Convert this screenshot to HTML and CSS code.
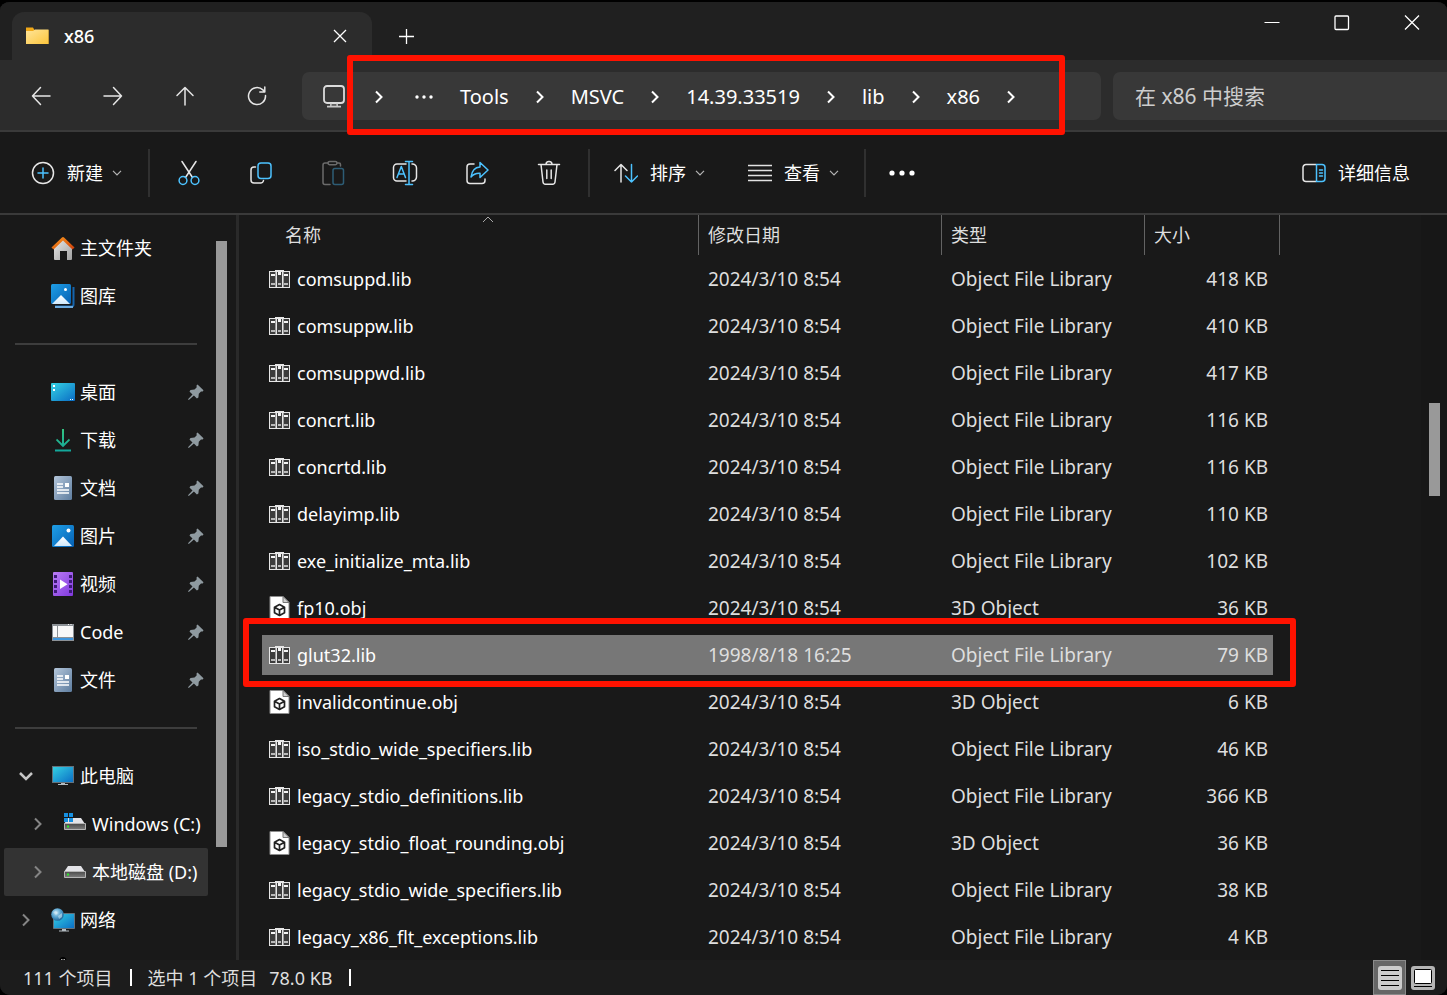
FILE: index.html
```html
<!DOCTYPE html>
<html lang="zh-CN">
<head>
<meta charset="utf-8">
<title>x86</title>
<link rel="stylesheet" href="styles.css">
</head>
<body>
<svg class="defs" aria-hidden="true">
  <defs>
    <linearGradient id="g-folder" x1="0" y1="0" x2="1" y2="1"><stop offset="0" stop-color="#ffe59a"/><stop offset="1" stop-color="#fcc53c"/></linearGradient>
    <linearGradient id="g-wall" x1="0" y1="0" x2="1" y2="1"><stop offset="0" stop-color="#e8e8e8"/><stop offset="1" stop-color="#a2a2a2"/></linearGradient>
    <linearGradient id="g-roof" x1="0" y1="0" x2="1" y2="1"><stop offset="0" stop-color="#f8951d"/><stop offset="1" stop-color="#d2430c"/></linearGradient>
    <linearGradient id="g-blue" x1="0" y1="0" x2="1" y2="1"><stop offset="0" stop-color="#1f9fe6"/><stop offset="1" stop-color="#0560b4"/></linearGradient>
    <linearGradient id="g-hill" x1="0" y1="0" x2="0" y2="1"><stop offset="0" stop-color="#ffffff"/><stop offset="1" stop-color="#cfe8fb"/></linearGradient>
    <linearGradient id="g-desk" x1="0" y1="0" x2="1" y2="1"><stop offset="0" stop-color="#35d3e4"/><stop offset="1" stop-color="#0a6cc4"/></linearGradient>
    <linearGradient id="g-down" x1="0" y1="0" x2="0" y2="1"><stop offset="0" stop-color="#34c481"/><stop offset="1" stop-color="#12a79c"/></linearGradient>
    <linearGradient id="g-doc" x1="0" y1="0" x2="1" y2="1"><stop offset="0" stop-color="#b4c6da"/><stop offset="1" stop-color="#5e7d9f"/></linearGradient>
    <linearGradient id="g-video" x1="0" y1="0" x2="1" y2="1"><stop offset="0" stop-color="#ba7cf5"/><stop offset="1" stop-color="#8038de"/></linearGradient>
    <linearGradient id="g-drive" x1="0" y1="0" x2="0" y2="1"><stop offset="0" stop-color="#4a4a4a"/><stop offset="1" stop-color="#7d7d7d"/></linearGradient>
    <radialGradient id="g-globe" cx=".4" cy=".35" r=".7"><stop offset="0" stop-color="#c6e6f5"/><stop offset=".5" stop-color="#58a4d0"/><stop offset="1" stop-color="#1b5f94"/></radialGradient>
  </defs>
  <symbol id="i-lib" viewBox="0 0 21 18">
    <path d="M0 1h6V0h9v1h6v17H0z" fill="#e6e6e6"/>
    <path d="M1 2h5v15H1zM8 2h5v15H8zM15 2h5v15h-5z" fill="#3c3c3c"/>
    <path d="M6.500 2v15M14.500 2v15" stroke="#9a9a9a" stroke-width="1"/>
    <path d="M2 4h4v2H2zM9 2h3v3H9zM15 4h4v2h-4z" fill="#f5f5f5"/>
    <path d="M2 13h4v2H2zM9 13h3v2H9zM15 13h4v2h-4z" fill="#b9b9b9"/>
  </symbol>
  <symbol id="i-obj" viewBox="0 0 20 24">
    <path d="M.5.5h13l6 6v17H.5z" fill="#fff" stroke="#8d8d8d"/>
    <path d="M13.500.5v6h6z" fill="#d0d0d0" stroke="#777"/>
    <path d="M10 8.500l5 2.700v5.600l-5 2.700-5-2.700v-5.600zM5 11.200l5 2.800 5-2.800M10 14v5.500" fill="none" stroke="#222" stroke-width="1.700" stroke-linejoin="round"/>
  </symbol>
  <symbol id="i-pin" viewBox="0 0 16 16">
    <path d="M9.500.5l6 5.700-.8 1.200-1.700.2-2.200 2.200-.4 3.700-1.500 1-3-3L.8 16 0 15.200l4.500-4.700L1.500 7.600l1-1.500 4-.6L8.600 3.500 8.600 1.300z" fill="#8f9aa0"/>
  </symbol>
  <symbol id="i-doc" viewBox="0 0 24 24">
    <rect x="3" width="18" height="24" rx="1.500" fill="url(#g-doc)"/>
    <path d="M6 8h6M6 11h6M6 14h12M6 17h12" stroke="#fff" stroke-width="1.400"/>
    <rect x="14" y="7" width="4" height="4" fill="#fff"/>
  </symbol>
  <symbol id="i-right" viewBox="0 0 10 14"><path d="M2 1.500L7.500 7 2 12.500" fill="none" stroke="currentColor" stroke-width="2"/></symbol>
  <symbol id="i-down" viewBox="0 0 10 6"><path d="M1 .8l4 4 4-4" fill="none" stroke="currentColor" stroke-width="1.200"/></symbol>
  <symbol id="i-drive" viewBox="0 0 24 24">
    <path d="M5 6h13l4 6H1z" fill="#e3e3e7"/>
    <path d="M1.500 11.500h21v6h-21z" fill="url(#g-drive)" stroke="#b5b5b5"/>
    <rect x="4" y="13.500" width="2" height="2" fill="#2bea2b"/>
  </symbol>
</svg>

<div class="window">
  <header class="titlebar">
    <div class="tab">
      <svg class="ic24" viewBox="0 0 24 24"><path d="M1 3.500h7l1.500 2.500H23.500v14H1z" fill="#f0a818"/><path d="M1 7h7l2-1.500h13.500V20H1z" fill="url(#g-folder)"/></svg>
      <span class="tab-title">x86</span>
      <button class="plain tab-close" aria-label="关闭标签页"><svg width="14" height="14" viewBox="0 0 14 14"><path d="M1 1l12 12M13 1L1 13" stroke="#fff" stroke-width="1.300"/></svg></button>
    </div>
    <button class="plain tab-add" aria-label="新建标签页"><svg width="16" height="16" viewBox="0 0 16 16"><path d="M8.500 1v15M1 8.500h15" stroke="#fff" stroke-width="1.300"/></svg></button>
    <div class="caption">
      <button class="plain" aria-label="最小化"><svg width="16" height="16" viewBox="0 0 16 16"><path d="M.5 7.500h15" stroke="#fff"/></svg></button>
      <button class="plain" aria-label="最大化"><svg width="16" height="16" viewBox="0 0 16 16"><rect x="1" y="1" width="13.500" height="13.500" rx="1" fill="none" stroke="#fff" stroke-width="1.300"/></svg></button>
      <button class="plain" aria-label="关闭"><svg width="16" height="16" viewBox="0 0 16 16"><path d="M1 .5l14 14M15 .5L1 14.500" stroke="#fff" stroke-width="1.300"/></svg></button>
    </div>
  </header>

  <nav class="navbar">
    <div class="nav-buttons">
      <button class="plain" aria-label="后退"><svg width="20" height="20" viewBox="0 0 20 20"><path d="M19 10H1.500M9.500 1.500L1.500 10l8 8.500" class="line"/></svg></button>
      <button class="plain" aria-label="前进"><svg width="20" height="20" viewBox="0 0 20 20"><path d="M1 10h17.500M10.500 1.500l8 8.500-8 8.500" class="line"/></svg></button>
      <button class="plain" aria-label="向上"><svg width="20" height="20" viewBox="0 0 20 20"><path d="M10 19V1.500M2 9.500l8-8 8 8" class="line"/></svg></button>
      <button class="plain" aria-label="刷新"><svg width="20" height="20" viewBox="0 0 20 20"><path d="M18.500 9.500a8.500 8.500 0 1 1-2.600-5.600L17.500 5.500M17.800 1v5h-5" class="line"/></svg></button>
    </div>
    <div class="address">
      <svg class="pc" width="24" height="24" viewBox="0 0 24 24"><rect x="2" y="1" width="20" height="17" rx="3" fill="none" stroke="#dcdcdc" stroke-width="1.800"/><path d="M9 18.500v3M15 18.500v3M5 21.700h14" stroke="#c8c8c8" stroke-width="1.800"/><path d="M9 20h6" stroke="#888"/></svg>
      <svg class="first-sep" width="10" height="14"><use href="#i-right"/></svg>
      <button class="plain more" aria-label="更多文件夹"><svg width="18" height="4" viewBox="0 0 18 4"><g fill="#fff"><circle cx="2" cy="2" r="1.700"/><circle cx="9" cy="2" r="1.700"/><circle cx="16" cy="2" r="1.700"/></g></svg></button>
      <button class="plain">Tools</button><svg class="sep" width="10" height="14"><use href="#i-right"/></svg>
      <button class="plain">MSVC</button><svg class="sep" width="10" height="14"><use href="#i-right"/></svg>
      <button class="plain">14.39.33519</button><svg class="sep" width="10" height="14"><use href="#i-right"/></svg>
      <button class="plain">lib</button><svg class="sep" width="10" height="14"><use href="#i-right"/></svg>
      <button class="plain">x86</button><svg class="sep" width="10" height="14"><use href="#i-right"/></svg>
      <div class="mark mark-path"></div>
    </div>
    <input class="search" type="text" placeholder="在 x86 中搜索" aria-label="在 x86 中搜索">
  </nav>

  <div class="commands">
    <button class="plain cmd cmd-new"><svg width="24" height="24" viewBox="0 0 24 24"><circle cx="12" cy="12" r="10.500" class="line"/><path d="M12 7v10M7 12h10" class="blue"/></svg>新建<svg class="caret" width="10" height="6"><use href="#i-down"/></svg></button>
    <span class="divider"></span>
    <div class="icon-group">
      <button class="plain icon-cmd" aria-label="剪切"><svg width="24" height="26" viewBox="0 0 24 26"><path d="M5 1.500L15.500 17.500M19 1.500L8.500 17.500" class="line"/><circle cx="6" cy="20.500" r="3.900" class="blue"/><circle cx="18" cy="20.500" r="3.900" class="blue"/></svg></button>
      <button class="plain icon-cmd" aria-label="复制"><svg width="24" height="24" viewBox="0 0 24 24"><path d="M6.500 6H5a3 3 0 0 0-3 3v10a3 3 0 0 0 3 3h6.500a3 3 0 0 0 3-2.500" class="line"/><rect x="9" y="2" width="13" height="15.500" rx="3" class="blue"/></svg></button>
      <button class="plain icon-cmd faded" aria-label="粘贴" disabled><svg width="24" height="26" viewBox="0 0 24 26"><path d="M9 24.500H4a2 2 0 0 1-2-2V5a2 2 0 0 1 2-2h3M16 3h2a1.500 1.500 0 0 1 1.500 1.500V6" class="line"/><rect x="7" y="1.500" width="9" height="3.200" rx="1.600" class="line"/><rect x="12" y="8.500" width="10.500" height="16" rx="2" class="blue"/></svg></button>
      <button class="plain icon-cmd" aria-label="重命名"><svg width="26" height="26" viewBox="0 0 26 26"><path d="M14 4H5a3.500 3.500 0 0 0-3.500 3.500v10A3.500 3.500 0 0 0 5 21h9M20 4a4 4 0 0 1 4.500 4v9a4 4 0 0 1-4.500 4" class="line"/><path d="M17 1.500v23M13.500 1.500h7M13.500 24.500h7M5 17.500l4.300-11 4.200 11M6.500 14h5.600" class="blue"/></svg></button>
      <button class="plain icon-cmd" aria-label="共享"><svg width="24" height="24" viewBox="0 0 24 24"><path d="M9 3H5a3 3 0 0 0-3 3v13.500a3 3 0 0 0 3 3h12a3 3 0 0 0 3-3V18" class="line"/><path d="M15 1.500l8 7.500-8 7.500v-4.300c-4-.2-7 1.200-9 3.800.8-6 4-9.700 9-10z" class="blue"/></svg></button>
      <button class="plain icon-cmd" aria-label="删除"><svg width="24" height="26" viewBox="0 0 24 26"><path d="M1.500 4.500h21M9 4.500a3 3 0 0 1 6 0M4 4.500l2 17.500a2.500 2.500 0 0 0 2.400 2.200h7.200A2.500 2.500 0 0 0 18 22l2-17.500M9.800 10v8.500M14.200 10v8.500" class="line"/></svg></button>
    </div>
    <span class="divider"></span>
    <button class="plain cmd cmd-sort"><svg width="24" height="24" viewBox="0 0 24 24"><path d="M7 21V4M1 9.500L7 3.500l6 6" class="line"/><path d="M17.500 3.500V21M11.500 15l6 6 6-6" class="blue"/></svg>排序<svg class="caret" width="10" height="6"><use href="#i-down"/></svg></button>
    <button class="plain cmd cmd-view"><svg width="24" height="24" viewBox="0 0 24 24"><path d="M0 4.500h24M0 9.500h24M0 14.500h24M0 19.500h24" stroke="#e2e2e2" stroke-width="1.600"/></svg>查看<svg class="caret" width="10" height="6"><use href="#i-down"/></svg></button>
    <span class="divider"></span>
    <button class="plain icon-cmd" aria-label="更多"><svg width="26" height="6" viewBox="0 0 26 6"><g fill="#fff"><circle cx="3" cy="3" r="2.600"/><circle cx="13" cy="3" r="2.600"/><circle cx="23" cy="3" r="2.600"/></g></svg></button>
    <button class="plain cmd cmd-details"><svg width="24" height="20" viewBox="0 0 24 20"><path d="M14 1.500H4a3 3 0 0 0-3 3v11a3 3 0 0 0 3 3h10" class="line"/><path d="M14.500 1.500H20a3 3 0 0 1 3 3v11a3 3 0 0 1-3 3h-5.500zM17.500 7h3M17.500 10h3M17.500 13h3" class="blue"/></svg>详细信息</button>
  </div>

  <main class="content">
    <aside class="sidebar">
      <div class="tree">
        <a class="node" href="#"><span class="twist"></span><svg class="ic24" viewBox="0 0 24 24"><path d="M3 11l9-8 9 8v12a1 1 0 0 1-1 1h-4v-9H9v9H4a1 1 0 0 1-1-1z" fill="url(#g-wall)"/><path d="M1.500 12.500L12 2.500l10.500 10" fill="none" stroke="url(#g-roof)" stroke-width="3" stroke-linejoin="round"/></svg>主文件夹</a>
        <a class="node" href="#"><span class="twist"></span><svg class="ic24" viewBox="0 0 24 24"><path d="M22.500 3v17.500a2 2 0 0 1-2 2H4" fill="none" stroke="#1565ad" stroke-width="2"/><path d="M4 23h18" stroke="#6cabe0" stroke-width="2"/><rect width="20" height="20" rx="1.500" fill="url(#g-blue)"/><path d="M1 20l9-9 9 9z" fill="url(#g-hill)"/><circle cx="14.500" cy="5.500" r="1.500" fill="#fff"/></svg>图库</a>
        <hr>
        <a class="node" href="#"><span class="twist"></span><svg class="ic24" viewBox="0 0 24 24"><rect y="3" width="24" height="18" rx="1" fill="url(#g-desk)"/><path d="M2 5h2v2H2zM2 9h2v2H2zM19 19h1v1h-1zM21 19h1v1h-1z" fill="#fff"/></svg>桌面<svg class="pin" width="16" height="16"><use href="#i-pin"/></svg></a>
        <a class="node" href="#"><span class="twist"></span><svg class="ic24" viewBox="0 0 24 24"><path d="M11 1h2v14.500l5-4.700 1 1.500-7 7-7-7 1-1.500 5 4.700zM4 21.500h16v2H4z" fill="url(#g-down)"/></svg>下载<svg class="pin" width="16" height="16"><use href="#i-pin"/></svg></a>
        <a class="node" href="#"><span class="twist"></span><svg class="ic24"><use href="#i-doc"/></svg>文档<svg class="pin" width="16" height="16"><use href="#i-pin"/></svg></a>
        <a class="node" href="#"><span class="twist"></span><svg class="ic24" viewBox="0 0 24 24"><rect x="1" y="1" width="22" height="22" rx="1.500" fill="url(#g-blue)"/><path d="M3 22l9-9.500 9 9.500z" fill="url(#g-hill)"/><circle cx="17.500" cy="6.500" r="2" fill="#fff"/></svg>图片<svg class="pin" width="16" height="16"><use href="#i-pin"/></svg></a>
        <a class="node" href="#"><span class="twist"></span><svg class="ic24" viewBox="0 0 24 24"><rect x="2" width="20" height="24" rx="1" fill="url(#g-video)"/><path d="M3 3h3v3H3zM3 8h3v3H3zM3 13h3v3H3zM3 18h3v3H3zM18 3h3v3h-3zM18 8h3v3h-3zM18 13h3v3h-3zM18 18h3v3h-3z" fill="#3d1a78"/><path d="M9 7.500l7.500 4.700L9 17z" fill="#fff"/></svg>视频<svg class="pin" width="16" height="16"><use href="#i-pin"/></svg></a>
        <a class="node" href="#"><span class="twist"></span><svg class="ic24" viewBox="0 0 24 24"><path d="M1 4h22v17H1z" fill="#8c9196"/><path d="M2 6h4v11H2zM7 6h15v11H7z" fill="#f8f8f8"/><path d="M2 18h20v2H2z" fill="#3f95dc"/><path d="M17 4.500h1M19.500 4.500h1" stroke="#fff"/></svg>Code<svg class="pin" width="16" height="16"><use href="#i-pin"/></svg></a>
        <a class="node" href="#"><span class="twist"></span><svg class="ic24"><use href="#i-doc"/></svg>文件<svg class="pin" width="16" height="16"><use href="#i-pin"/></svg></a>
        <hr>
        <a class="node" href="#"><span class="twist open"><svg width="16" height="12" viewBox="0 0 16 12"><path d="M2 3l6 6 6-6" fill="none" stroke="#c6c6c6" stroke-width="2.500"/></svg></span><svg class="ic24" viewBox="0 0 24 24"><rect x="1.500" y="2.500" width="21" height="16" fill="url(#g-desk)" stroke="#64727c"/><path d="M10 19h4v1h3v1H7v-1h3z" fill="#b4bcc2"/></svg>此电脑</a>
        <a class="node sub" href="#"><span class="twist"><svg width="10" height="14"><use href="#i-right"/></svg></span><svg class="ic24" viewBox="0 0 24 24"><path d="M5 6h13l4 6H1z" fill="#e3e3e7"/><path d="M1.500 11.500h21v6h-21z" fill="url(#g-drive)" stroke="#b5b5b5"/><path d="M4 13.500h2v2H4z" fill="#2bea2b"/><path d="M1 1h4v4H1zM6 1h4v4H6zM1 6h4v4H1zM6 6h4v4H6z" fill="#1690e2"/></svg>Windows (C:)</a>
        <a class="node sub current" href="#"><span class="twist"><svg width="10" height="14"><use href="#i-right"/></svg></span><svg class="ic24"><use href="#i-drive"/></svg>本地磁盘 (D:)</a>
        <a class="node" href="#"><span class="twist"><svg width="10" height="14"><use href="#i-right"/></svg></span><svg class="ic24" viewBox="0 0 24 24"><path d="M2.500 5.500h21v15h-21z" fill="url(#g-desk)" stroke="#64727c"/><path d="M11 21h4v1.500h3v1H8v-1h3z" fill="#b4bcc2"/><circle cx="6.500" cy="6.500" r="6.300" fill="url(#g-globe)"/><path d="M2 4l3-1 2 2-2 2zM7 8l4-3v4l-3 2z" fill="#e2f2f9" opacity=".5"/></svg>网络</a>
        <a class="node" href="#" aria-label="Linux"><span class="twist"></span><svg class="ic24" viewBox="0 0 24 24"><path d="M8.500 5a3.500 4 0 0 1 7 0v5l4 9H4l4.500-9z" fill="#000"/><path d="M10 3.500h1.500M12.500 3.500H14" stroke="#aaa"/></svg></a>
      </div>
      <div class="scroll"><div class="thumb side-thumb"></div></div>
    </aside>

    <section class="files">
      <table>
        <colgroup><col class="c-name"><col class="c-date"><col class="c-type"><col class="c-size"></colgroup>
        <thead>
          <tr><th>名称<svg class="sorted" width="12" height="7" viewBox="0 0 12 7"><path d="M1 6l5-5 5 5" fill="none" stroke="#a8a8a8"/></svg></th><th>修改日期</th><th>类型</th><th>大小</th></tr>
        </thead>
        <tbody>
          <tr><td><div class="file"><svg class="lib"><use href="#i-lib"/></svg>comsuppd.lib</div></td><td>2024/3/10 8:54</td><td>Object File Library</td><td>418 KB</td></tr>
          <tr><td><div class="file"><svg class="lib"><use href="#i-lib"/></svg>comsuppw.lib</div></td><td>2024/3/10 8:54</td><td>Object File Library</td><td>410 KB</td></tr>
          <tr><td><div class="file"><svg class="lib"><use href="#i-lib"/></svg>comsuppwd.lib</div></td><td>2024/3/10 8:54</td><td>Object File Library</td><td>417 KB</td></tr>
          <tr><td><div class="file"><svg class="lib"><use href="#i-lib"/></svg>concrt.lib</div></td><td>2024/3/10 8:54</td><td>Object File Library</td><td>116 KB</td></tr>
          <tr><td><div class="file"><svg class="lib"><use href="#i-lib"/></svg>concrtd.lib</div></td><td>2024/3/10 8:54</td><td>Object File Library</td><td>116 KB</td></tr>
          <tr><td><div class="file"><svg class="lib"><use href="#i-lib"/></svg>delayimp.lib</div></td><td>2024/3/10 8:54</td><td>Object File Library</td><td>110 KB</td></tr>
          <tr><td><div class="file"><svg class="lib"><use href="#i-lib"/></svg>exe_initialize_mta.lib</div></td><td>2024/3/10 8:54</td><td>Object File Library</td><td>102 KB</td></tr>
          <tr><td><div class="file"><svg class="obj"><use href="#i-obj"/></svg>fp10.obj</div></td><td>2024/3/10 8:54</td><td>3D Object</td><td>36 KB</td></tr>
          <tr class="selected"><td><div class="file"><svg class="lib"><use href="#i-lib"/></svg>glut32.lib</div></td><td>1998/8/18 16:25</td><td>Object File Library</td><td>79 KB<div class="mark mark-row"></div></td></tr>
          <tr><td><div class="file"><svg class="obj"><use href="#i-obj"/></svg>invalidcontinue.obj</div></td><td>2024/3/10 8:54</td><td>3D Object</td><td>6 KB</td></tr>
          <tr><td><div class="file"><svg class="lib"><use href="#i-lib"/></svg>iso_stdio_wide_specifiers.lib</div></td><td>2024/3/10 8:54</td><td>Object File Library</td><td>46 KB</td></tr>
          <tr><td><div class="file"><svg class="lib"><use href="#i-lib"/></svg>legacy_stdio_definitions.lib</div></td><td>2024/3/10 8:54</td><td>Object File Library</td><td>366 KB</td></tr>
          <tr><td><div class="file"><svg class="obj"><use href="#i-obj"/></svg>legacy_stdio_float_rounding.obj</div></td><td>2024/3/10 8:54</td><td>3D Object</td><td>36 KB</td></tr>
          <tr><td><div class="file"><svg class="lib"><use href="#i-lib"/></svg>legacy_stdio_wide_specifiers.lib</div></td><td>2024/3/10 8:54</td><td>Object File Library</td><td>38 KB</td></tr>
          <tr><td><div class="file"><svg class="lib"><use href="#i-lib"/></svg>legacy_x86_flt_exceptions.lib</div></td><td>2024/3/10 8:54</td><td>Object File Library</td><td>4 KB</td></tr>
        </tbody>
      </table>
    </section>
    <div class="scroll file-scroll"><div class="thumb file-thumb"></div></div>
  </main>

  <footer class="status">
    <span class="total">111 个项目</span><span class="bar"></span>
    <span class="picked">选中 1 个项目</span><span class="size">78.0 KB</span><span class="bar"></span>
    <div class="views">
      <button class="plain view on" aria-label="详细信息视图"><svg width="24" height="24" viewBox="0 0 24 24"><rect width="24" height="24" rx="3" fill="#cbcbcb"/><path d="M3 4.500h18M3 9.500h18M3 14.500h18M3 19.500h18" stroke="#000"/></svg></button>
      <button class="plain view" aria-label="大图标视图"><svg width="24" height="24" viewBox="0 0 24 24"><rect width="24" height="24" rx="3" fill="#b5b5b5"/><rect x="3.500" y="3.500" width="17" height="14" rx="1" fill="#fff" stroke="#000"/><path d="M3 20.500h18" stroke="#000"/></svg></button>
    </div>
  </footer>
</div>
</body>
</html>
```
FILE: styles.css
```css
* { box-sizing: border-box; }

body {
  margin: 0;
  background: #000;
  color: #fff;
  font: 18px/24px "Noto Sans", "Noto Sans CJK SC", sans-serif;
}

.defs { position: absolute; width: 0; height: 0; }
svg { flex: none; }
.ic24 { width: 24px; height: 24px; }
.line { fill: none; stroke: #e6e6e6; stroke-width: 1.5; stroke-linecap: round; stroke-linejoin: round; }
.blue { fill: none; stroke: #4cc2ff; stroke-width: 1.5; stroke-linecap: round; stroke-linejoin: round; }

.plain {
  display: flex;
  align-items: center;
  justify-content: center;
  padding: 0;
  border: 0;
  background: none;
  color: inherit;
  font: inherit;
  white-space: nowrap;
}

.window {
  display: flex;
  flex-direction: column;
  height: 100vh;
  border-top: 2px solid #000;
  border-radius: 10px;
  background: #191919;
  overflow: hidden;
}

/* Title bar */
.titlebar {
  display: flex;
  flex: none;
  height: 58px;
  padding-left: 12px;
  background: #202020;
}
.tab {
  display: flex;
  align-items: center;
  width: 360px;
  height: 48px;
  margin-top: 10px;
  padding: 0 25px 0 13px;
  border-radius: 12px 12px 0 0;
  background: #2c2c2c;
}
.tab-title { margin-left: 15px; font-weight: 500; }
.tab-close { margin-left: auto; }
.tab-add { width: 68px; padding-top: 10px; }
.caption { display: flex; height: 42px; margin-left: auto; }
.caption .plain { width: 70px; }

/* Navigation */
.navbar {
  display: flex;
  flex: none;
  align-items: center;
  height: 72px;
  padding-top: 2px;
  background: #2c2c2c;
  border-bottom: 2px solid #3a3a3a;
}
.nav-buttons { display: flex; width: 302px; padding-left: 5px; }
.nav-buttons .plain { width: 72px; height: 48px; }
.address {
  position: relative;
  display: flex;
  flex: 1;
  align-items: center;
  height: 48px;
  margin-right: 12px;
  padding: 2px 0 0 20px;
  border-radius: 7px;
  background: #383838;
  font-size: 20px;
}
.first-sep { margin: 0 31px 0 28px; }
.more { width: 18px; height: 24px; margin-right: 27px; }
.sep { margin: 0 26px; }
.search {
  width: 334px;
  height: 48px;
  padding: 0 22px;
  border: 0;
  border-radius: 7px 0 0 7px;
  background: #383838;
  color: #fff;
  font: 21px/28px "Noto Sans", "Noto Sans CJK SC", sans-serif;
}
.search::placeholder { color: #cdcdcd; opacity: 1; }

.mark {
  position: absolute;
  z-index: 2;
  border: 6px solid #ff1200;
  border-radius: 3px;
  pointer-events: none;
}
.mark-path { inset: -17px 36px -15px 45px; }
.mark-row { inset: -13px -16px -9px -19px; }

/* Commands */
.commands {
  display: flex;
  flex: none;
  align-items: center;
  height: 83px;
  border-bottom: 2px solid #3a3a3a;
}
.cmd { height: 48px; }
.caret { margin-left: 9px; color: #b4b4b4; }
.cmd svg:first-child { margin-right: 12px; }
.cmd-new { padding: 0 26px 0 31px; }
.cmd-sort { padding: 0 43px 0 24px; }
.cmd-view { padding-right: 25px; }
.cmd-details { margin-left: auto; padding-right: 37px; }
.divider { width: 2px; height: 48px; background: #303030; }
.icon-group { display: flex; margin: 0 3px; }
.icon-cmd { width: 72px; height: 48px; }
.faded svg { opacity: .4; }

/* Folder tree */
.content { display: flex; flex: 1; min-height: 0; }
.sidebar {
  display: flex;
  flex: none;
  width: 239px;
  border-right: 3px solid #2a2a2a;
}
.tree {
  display: flex;
  flex-direction: column;
  width: 216px;
  padding: 9px 8px 0 4px;
  overflow: hidden;
}
.node {
  display: flex;
  flex: none;
  align-items: center;
  height: 48px;
  padding: 0 4px 0 10px;
  color: #fff;
  text-decoration: none;
  white-space: nowrap;
}
.node .ic24 { margin-right: 5px; }
.twist { display: flex; justify-content: center; width: 24px; margin-right: 13px; color: #858585; }
.sub { padding-left: 22px; }
.current { background: #333; border-radius: 2px; }
.pin { margin-left: auto; }
.tree hr {
  flex: none;
  width: 182px;
  height: 2px;
  margin: 23px 0 23px 11px;
  border: 0;
  background: #3d3d3d;
}
.thumb { width: 11px; background: #999; }
.side-thumb { height: 606px; margin-top: 26px; }

/* File list */
.files { flex: 1; min-width: 0; padding-left: 23px; overflow: hidden; }
table { width: 1018px; table-layout: fixed; border-collapse: separate; border-spacing: 0; }
.c-name { width: 437px; }
.c-date { width: 243px; }
.c-type { width: 203px; }
.c-size { width: 135px; }
th {
  position: relative;
  height: 40px;
  padding: 0 0 0 9px;
  border-right: 1px solid #636363;
  color: #dedede;
  font-weight: 400;
  text-align: left;
}
th:first-child { padding-left: 23px; }
.sorted { position: absolute; top: 1px; left: 220px; }
tbody tr { position: relative; }
td {
  height: 47px;
  padding: 0 0 0 9px;
  border: solid transparent;
  border-width: 4px 0 3px;
  background-clip: padding-box;
  color: #dedede;
  font-size: 19px;
  white-space: nowrap;
}
td:first-child { padding-left: 7px; color: #fff; font-size: 18px; }
td:last-child { padding-right: 5px; border-right-width: 7px; text-align: right; }
.file { display: flex; align-items: center; gap: 7px; }
.lib { width: 21px; height: 18px; }
.obj { width: 21px; height: 24px; }
.selected td { background-color: #777; }
.file-scroll { width: 26px; padding-left: 8px; background: #171717; }
.file-thumb { height: 93px; margin-top: 188px; }

/* Status */
.status {
  display: flex;
  flex: none;
  align-items: center;
  height: 35px;
  padding: 0 8px 0 23px;
  background: #1c1c1c;
  color: #dedede;
}
.bar { width: 2px; height: 17px; margin: 0 16px 0 17px; background: #fff; }
.size { margin-left: 12px; }
.views { display: flex; align-self: stretch; margin-left: auto; }
.view { width: 33px; }
.view.on { border: 1px solid #8a8a8a; background: #666; }
```
